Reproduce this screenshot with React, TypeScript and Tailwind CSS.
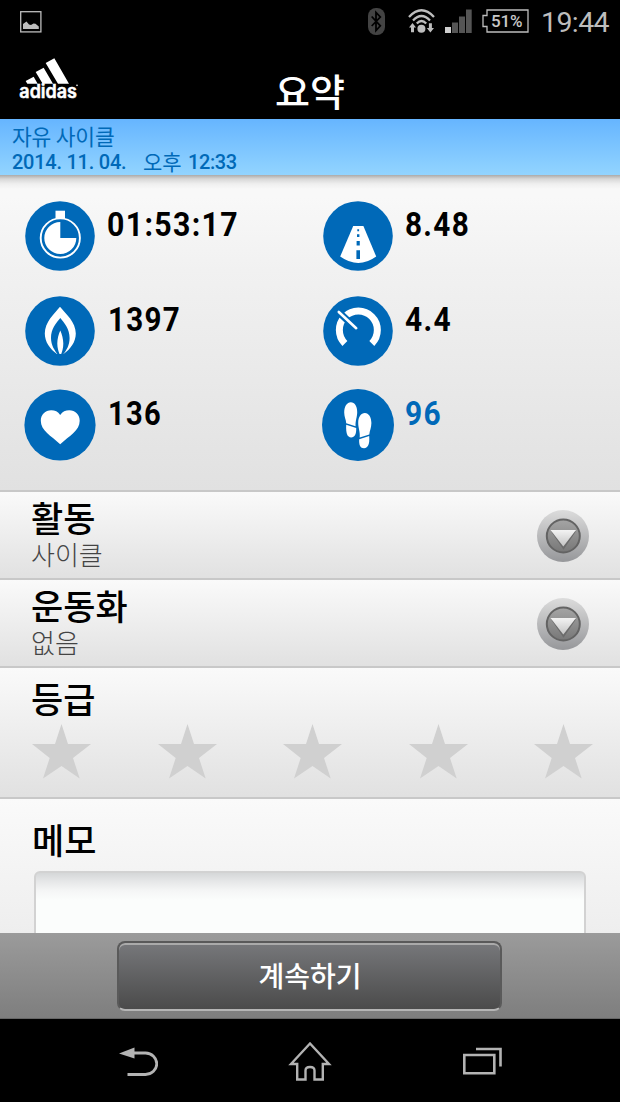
import React from "react"

const stats = [
  { id: 'time', value: '01:53:17', icon: 'stopwatch', className: 'text-black', width: 132 },
  { id: 'distance', value: '8.48', icon: 'road', className: 'text-black', width: 65 },
  { id: 'calories', value: '1397', icon: 'flame', className: 'text-black', width: 73 },
  { id: 'speed', value: '4.4', icon: 'gauge', className: 'text-black', width: 47 },
  { id: 'heart', value: '136', icon: 'heart', className: 'text-black', width: 54 },
  { id: 'steps', value: '96', icon: 'steps', className: 'text-[#0069b8]', width: 37 },
]

const rows = [
  { id: 'activity', title: '활동', value: '사이클' },
  { id: 'shoes', title: '운동화', value: '없음' },
]

const BLUE = '#0069b8'

const StatIcon = ({ name }: { name: string }) => {
  const radius = name === 'steps' ? 36 : name === 'heart' ? 35.6 : 34.8
  return (
    <svg className="h-[72px] w-[72px] shrink-0" viewBox="0 0 72 72" fill="white">
      <circle cx="36" cy="36" r={radius} fill={BLUE} />
      {name === 'stopwatch' && (
        <>
          <path d="M31.5 10.7H41V19H31.5Z" />
          <circle cx="36.3" cy="38" r="19.6" fill={BLUE} stroke="white" strokeWidth="1.9" />
          <path d="M36.3 38V22A16 16 0 1 0 52.3 38Z" />
        </>
      )}
      {name === 'road' && (
        <>
          <path d="M31.2 26H41.4L54.2 56.5Q36.3 69.5 18.2 56.5Z" />
          <path fill={BLUE} d="M34.4 50.3h3.6V59h-3.6zM34.6 41h3.2v4.4h-3.2zM35 34.2h2.4v2.9H35zM35.3 29.3h1.8v2h-1.8z" />
        </>
      )}
      {name === 'flame' && (
        <>
          <path d="M36 11.7C30 19 20.8 27 20.8 38.5C20.8 47 26 54 33 59H39.5C46.5 54 51.8 47 51.8 38.5C51.8 27 42 19 36 11.7Z" />
          <path fill={BLUE} d="M36.3 23C32 28 27 34 27 43C27 50 30.5 55.5 33.8 59.5H39C42.5 55.5 45.6 50 45.6 43C45.6 34 40.5 28 36.3 23Z" />
          <path d="M36.3 35.5C34.5 39.5 33.3 44 33.3 48.5C33.3 53 34.6 56.5 35.5 59H37.2C38.2 56.5 39.3 53 39.3 48.5C39.3 44 38 39.5 36.3 35.5Z" />
        </>
      )}
      {name === 'gauge' && (
        <>
          <path d="M22.9 48.5A19 19 0 1 1 49.8 48.5" fill="none" stroke="white" strokeWidth="7" />
          <path d="M14.5 15L36 35.2" stroke={BLUE} strokeWidth="7" />
          <path d="M16.8 17L34.2 33.2" stroke="white" strokeWidth="2.6" strokeLinecap="round" />
        </>
      )}
      {name === 'heart' && (
        <path d="M36.2 26C38.5 22.5 41.5 21.3 45.3 21.3C51.2 21.3 55.7 25.8 55.7 31.8C55.7 42 45.5 46.5 36.2 55.3C27 46.5 16.8 42 16.8 31.8C16.8 25.8 21.3 21.3 27.2 21.3C31 21.3 34 22.5 36.2 26Z" />
      )}
      {name === 'steps' && (
        <>
          <path d="M28.8 13.3C32.7 13.3 35.2 17.5 35.2 23C35.2 28.5 33.2 31.5 33.6 37.3L24.2 34.2C24 30.5 22.2 28 22.2 23.5C22.2 17.5 25 13.3 28.8 13.3Z" />
          <path d="M24.2 35.8L34.2 38.9C34.5 45 32.6 48.4 29.2 48.4C25.2 48.4 23.8 44.5 24.2 35.8Z" />
          <path d="M42.9 24C46.7 24 49.4 28.3 49.4 34C49.4 39 47.6 41.5 47.3 45.6L37.7 48.5C38.3 42.5 36.2 39.5 36.2 33.8C36.2 28 39 24 42.9 24Z" />
          <path d="M47.2 47.1C47.8 55 46.2 59.2 42 59.2C38.3 59.2 36.8 56 37.2 50.2Z" />
        </>
      )}
    </svg>
  )
}

const StatusBar = () => (
  <div className="flex h-11 shrink-0 items-center justify-between pl-5 pr-[11px]">
    <svg className="h-[22px] w-[22px]" viewBox="0 0 22 22">
      <rect x="0.7" y="0.7" width="20.2" height="20.2" fill="none" stroke="#bdbdbd" strokeWidth="1.3" />
      <path d="M3 18V13L6.5 10.5L9 13.5L11 14L13.5 12.5L15.5 12.7L18.8 15.5V18Z" fill="#bdbdbd" />
    </svg>
    <div className="flex items-center">
      <svg className="mr-[23px] h-[27px] w-[17px] -translate-y-px" viewBox="0 0 17 27">
        <rect width="17" height="27" rx="8" fill="#434343" />
        <path d="M3.7 8.5L12.3 17.8L8 22.5V4.5L12.3 9L3.7 18" fill="none" stroke="black" strokeWidth="1.8" />
      </svg>
      <svg className="mr-[10px] h-6 w-[27px] -translate-y-px" viewBox="0 0 27 24" fill="#bdbdbd">
        <g fill="none" stroke="#bdbdbd" strokeWidth="2.3">
          <path d="M1 8Q13.5 -5.5 26 8" />
          <path d="M5 11.5Q13.5 2.5 22 11.5" />
          <path d="M8.8 14.5Q13.5 9.5 18.2 14.5" />
        </g>
        <circle cx="13.4" cy="19.8" r="4" />
        <path d="M4.5 14L8 18.5H6V23.3H3V18.5H1ZM20.9 14.2H23.9V19H26L22.4 23.4L18.8 19H20.9Z" />
      </svg>
      <svg className="mr-[10px] h-6 w-[27px] -translate-y-px" viewBox="0 0 27 24" fill="#555">
        <path d="M0 18H6V24H0Z" fill="#cfcfcf" />
        <path d="M7 13.5H13V24H7ZM14 7.5H20V24H14ZM21 0.5H26.7V24H21Z" />
      </svg>
      <div className="relative mr-[12px] flex h-6 w-[47px] -translate-y-px items-center">
        <svg className="absolute inset-0" width="47" height="24" viewBox="0 0 47 24" fill="none">
          <path d="M5 1H46V23H5V17.5H1V6.5H5Z" stroke="#bdbdbd" strokeWidth="1.3" />
        </svg>
        <span className="relative ml-[9px] font-['Roboto'] text-[17px] font-medium leading-none tracking-[-0.2px] text-[#c8c8c8]">51%</span>
      </div>
      <span className="mt-[2px] font-['Roboto'] text-[28.5px] leading-none tracking-[-0.6px] text-[#bdbdbd]">19:44</span>
    </div>
  </div>
)

const Header = () => (
  <header className="grid h-[75px] shrink-0 grid-cols-[1fr_auto_1fr]">
    <svg className="ml-[18px] mt-[14px] h-[46px] w-[66px] overflow-visible" viewBox="54 174 198 138" fill="white">
      <path d="M137 189L163 175L207 251H174ZM107 216L131 203L159 251H128ZM77 243L101 230L113 251H82Z" />
      <text x="58" y="293" fontFamily="Inter, 'Liberation Sans', sans-serif" fontWeight="600" fontSize="56" stroke="white" strokeWidth="1.5" textLength="173" lengthAdjust="spacingAndGlyphs">adidas</text>
      <circle cx="231" cy="256" r="2.5" />
    </svg>
    <h1 className="mt-[20px] font-['Noto_Sans_CJK_KR',sans-serif] text-[38px] font-medium leading-[52px] text-white">요약</h1>
    <span />
  </header>
)

const Summary = () => (
  <section className="h-[317px] shrink-0 border-b-2 border-[#c8c8c8] bg-[linear-gradient(#aaa_0px,#d8d8d8_4px,#efefef_9px,#f8f8f8_14px,#f8f8f8_22px,#f1f1f1_95px,#e1e1e1_316px)] pl-6 pt-[25px]">
    <div className="grid grid-cols-[298px_1fr] gap-y-[22.5px]">
      {stats.map((stat) => (
        <div key={stat.id} className="flex items-start">
          <StatIcon name={stat.icon} />
          <svg className={`ml-[11px] mt-[3px] h-10 overflow-visible ${stat.className}`} width={stat.width} viewBox={`0 0 ${stat.width} 40`}>
            <text x={stat.value.startsWith('1') ? 1 : 0} y="32.5" fill="currentColor" fontFamily="Roboto, sans-serif" fontWeight="700" fontSize="34" letterSpacing="1.5" textLength={stat.width} lengthAdjust="spacingAndGlyphs">{stat.value}</text>
          </svg>
        </div>
      ))}
    </div>
  </section>
)

const DropdownIcon = () => (
  <svg className="mt-px h-[52px] w-[52px]" viewBox="0 0 52 52">
    <defs>
      <linearGradient id="ring" x2="0" y2="1">
        <stop stopColor="#dcdcdc" />
        <stop offset="1" stopColor="#96979a" />
      </linearGradient>
      <linearGradient id="disc" x2="0" y2="1">
        <stop stopColor="#a5a5a5" />
        <stop offset="1" stopColor="#777" />
      </linearGradient>
      <linearGradient id="arrow" x2="0" y2="1">
        <stop stopColor="#f3f3f3" />
        <stop offset="1" stopColor="#c4c4c4" />
      </linearGradient>
    </defs>
    <circle cx="26" cy="26" r="26" fill="url(#ring)" />
    <circle cx="26.3" cy="26" r="16.5" fill="url(#disc)" stroke="#636363" strokeWidth="2" />
    <path d="M15 21L26.5 38L38 21" fill="none" stroke="#6b6b6b" strokeWidth="2" />
    <path d="M13.5 20H39L26.3 36.5Z" fill="url(#arrow)" />
  </svg>
)

const Title = ({ children }: { children: React.ReactNode }) => (
  <h2 className="font-['Noto_Sans_CJK_KR',sans-serif] text-[35px] font-medium leading-[44px] text-black">{children}</h2>
)

const Rating = () => (
  <section className="h-[131px] shrink-0 border-b-2 border-[#c8c8c8] bg-linear-to-b from-[#fafafa] to-[#e1e1e1] pl-[31px] pr-[27px] pt-[8px]">
    <Title>등급</Title>
    <div className="mt-[3px] flex justify-between">
      {[1, 2, 3, 4, 5].map((n) => (
        <svg key={n} className="h-[56px] w-[60px]" viewBox="0 0 60 56" fill="#d0d0d0">
          <path d="M30.5 1L37 21H60L42 35L48.7 55.5L30.5 43L12 55.5L18.7 35L1 21H24Z" />
        </svg>
      ))}
    </div>
  </section>
)

const Memo = () => (
  <section className="h-[134px] shrink-0 overflow-hidden bg-linear-to-b from-[#fafafa] to-[#eee] px-[34px] pt-[18px]">
    <div className="-ml-[2px]">
      <Title>메모</Title>
    </div>
    <div className="mt-[10px] h-[100px] rounded-t-md border-2 border-[#d2d2d2] bg-[linear-gradient(#d5d7d8_0px,#e7e8e9_9px,#f5f6f6_18px,#fbfdfc_27px)]" />
  </section>
)

const NavBar = () => (
  <nav className="flex h-[83px] shrink-0 items-center justify-between bg-black px-[118px]">
    <svg className="h-10 w-10" viewBox="0 0 40 40">
      <path d="M1 12.5L16.5 6.5V17.5Z" fill="#b3b3b3" />
      <path d="M15 12H27.5A11.2 10.7 0 0 1 27.5 33.5H9.5" fill="none" stroke="#b3b3b3" strokeWidth="2.8" />
    </svg>
    <svg className="h-11 w-[46px]" viewBox="0 0 46 44" fill="none" stroke="#b3b3b3" strokeWidth="2.4">
      <path d="M23 4.5L4 25H10.2V40.5H18.5V31.5Q18.5 28 23 28Q27.5 28 27.5 31.5V40.5H35.8V25H42Z" />
    </svg>
    <svg className="h-10 w-10" viewBox="0 0 40 40" fill="none" stroke="#b3b3b3" strokeWidth="2.6">
      <path d="M2.3 14H32.3V32.3H2.3ZM14 8H38.5V25.5" />
    </svg>
  </nav>
)

const App = () => {
  return (
    <div className="flex h-[1102px] w-[620px] flex-col overflow-hidden bg-black">
      <StatusBar />
      <Header />
      <div className="h-[56px] shrink-0 bg-linear-to-b from-[#66b5ff] to-[#92d4ff] pl-3 pt-[4px] font-['Noto_Sans_CJK_KR',sans-serif] text-[#0069b8]">
        <p className="text-[21.5px] leading-[26px] tracking-[-0.2px]">자유 사이클</p>
        <p className="flex text-[20px] font-medium leading-[26px]">
          <span className="w-[131px] font-['Roboto'] tracking-[-0.25px]">2014. 11. 04.</span>
          <span className="w-[45px] text-[21px] font-normal leading-[25px]">오후</span>
          <span className="font-['Roboto'] tracking-[-0.4px]">12:33</span>
        </p>
      </div>
      <Summary />
      {rows.map((row) => (
        <section key={row.id} className="flex h-[88px] shrink-0 items-center justify-between border-b-2 border-[#c8c8c8] bg-linear-to-b from-[#fafafa] to-[#e1e1e1] pl-[31px] pr-[31px]">
          <div className="-mt-[6px]">
            <Title>{row.title}</Title>
            <p className="font-['Noto_Sans_CJK_KR',sans-serif] text-[26px] font-light leading-[30px] text-[#444]">{row.value}</p>
          </div>
          <DropdownIcon />
        </section>
      ))}
      <Rating />
      <Memo />
      <footer className="flex h-[86px] shrink-0 justify-center border-b border-[#666] bg-linear-to-b from-[#9b9b9b] to-[#7e7e7e] pr-[2px] pt-2">
        <button className="h-[70px] w-[385px] rounded-lg border-2 border-[#5a5a5a] border-b-[#b5b5b5] bg-linear-to-b from-[#77787b] to-[#4b4b4b] pb-[3px] pl-[2px] font-['Noto_Sans_CJK_KR',sans-serif] text-[28px] font-medium leading-none text-white shadow-[inset_0_2px_0_#aaa]">
          계속하기
        </button>
      </footer>
      <NavBar />
    </div>
  )
}

export default App
